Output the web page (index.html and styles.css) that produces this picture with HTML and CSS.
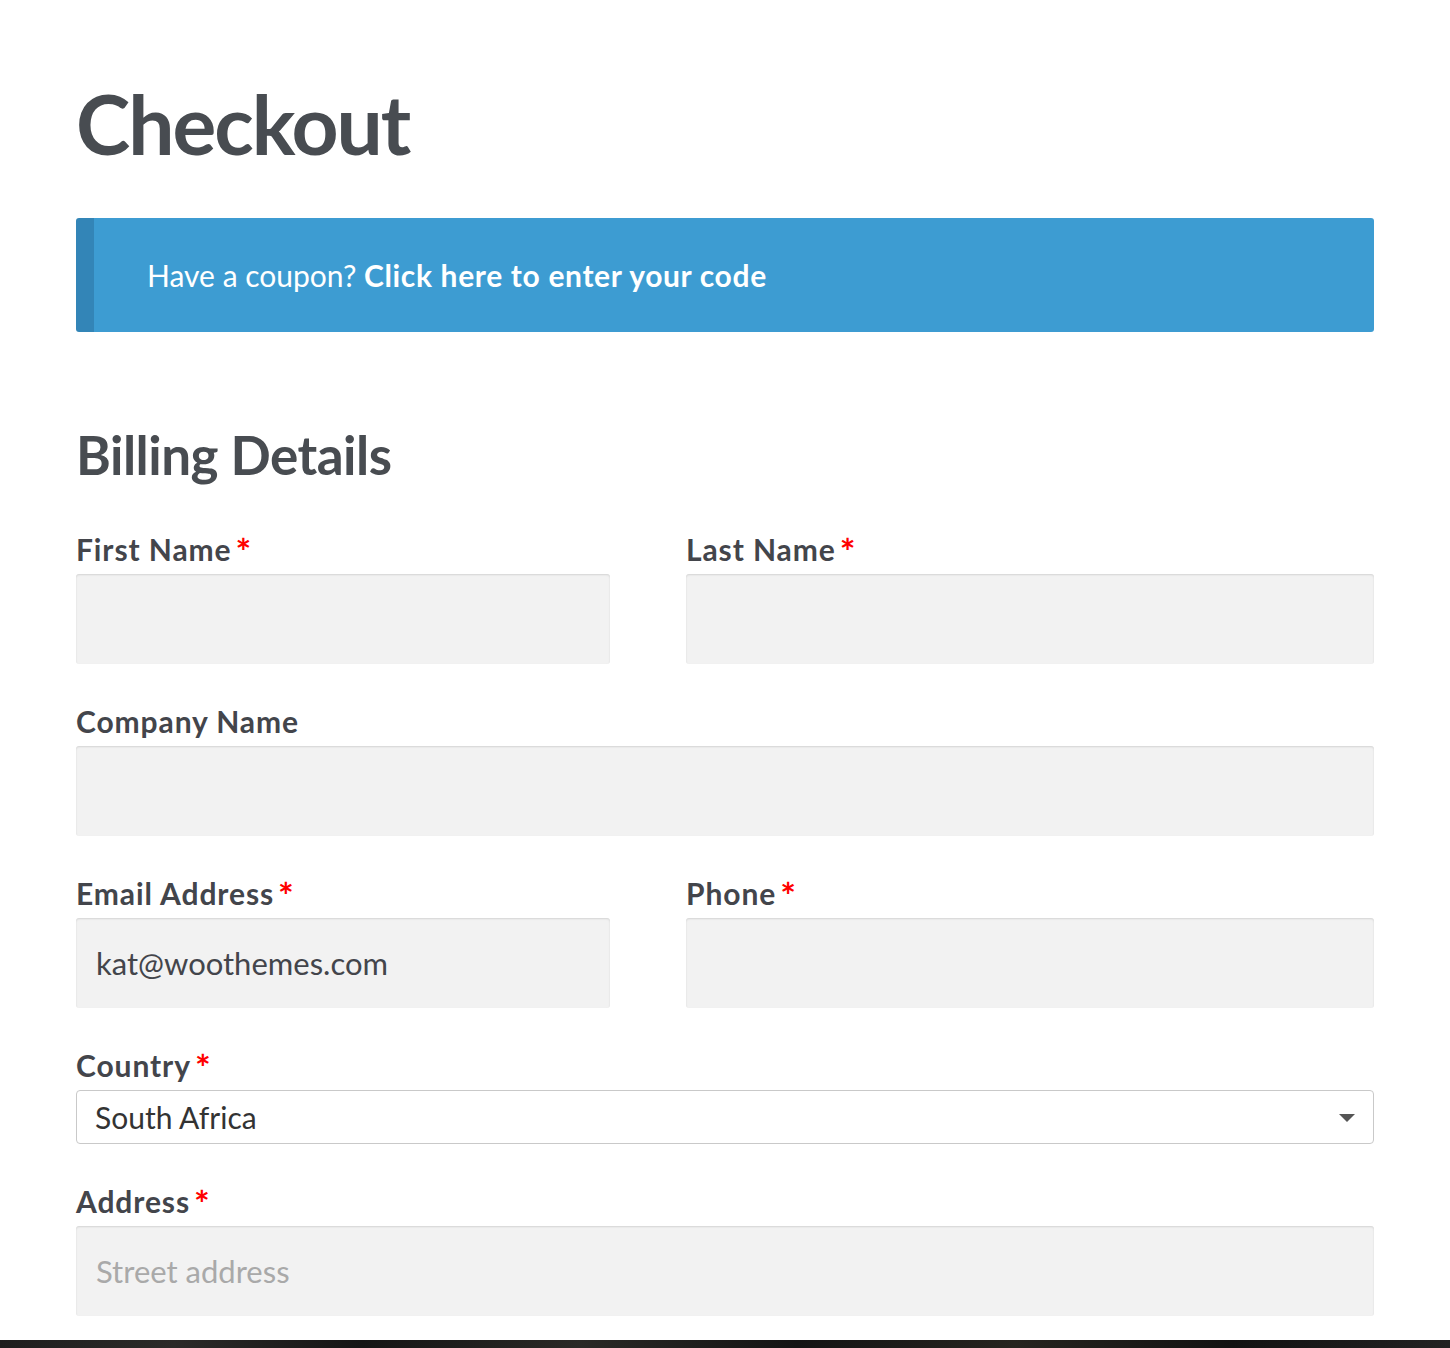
FILE: index.html
```html
<!DOCTYPE html>
<html lang="en">
<head>
<meta charset="utf-8">
<title>Checkout</title>
<link rel="stylesheet" href="styles.css">
</head>
<body>
<main class="page">
  <h1 class="title">Checkout</h1>
  <div class="notice">Have a coupon?&nbsp;<a class="notice-link" href="#">Click here to enter your code</a></div>
  <h2 class="section-title">Billing Details</h2>
  <form class="fields">
    <div class="field">
      <label class="label">First Name<span class="req">*</span></label>
      <input class="input" type="text">
    </div>
    <div class="field">
      <label class="label">Last Name<span class="req">*</span></label>
      <input class="input" type="text">
    </div>
    <div class="field wide">
      <label class="label">Company Name</label>
      <input class="input" type="text">
    </div>
    <div class="field">
      <label class="label">Email Address<span class="req">*</span></label>
      <input class="input" type="text" value="kat@woothemes.com">
    </div>
    <div class="field">
      <label class="label">Phone<span class="req">*</span></label>
      <input class="input" type="text">
    </div>
    <div class="field wide">
      <label class="label">Country<span class="req">*</span></label>
      <div class="select"><span class="select-text">South Africa</span><span class="arrow"></span></div>
    </div>
    <div class="field wide">
      <label class="label">Address<span class="req">*</span></label>
      <input class="input" type="text" placeholder="Street address">
    </div>
  </form>
</main>
<div class="footer-strip"></div>
</body>
</html>
```
FILE: styles.css
```css
html, body {
  margin: 0;
  padding: 0;
  background: #ffffff;
}
body {
  font-family: Lato, "Open Sans", sans-serif;
  color: #43454b;
  overflow: hidden;
}
.page {
  padding: 82px 76px 24px 76px;
}
.title {
  margin: 0;
  font-size: 82px;
  line-height: 82px;
  font-weight: 700;
  color: #484c51;
  letter-spacing: -2px;
}
.notice {
  margin-top: 54px;
  height: 114px;
  box-sizing: border-box;
  background: #3d9cd2;
  border-left: 18px solid #3385b7;
  border-radius: 3px;
  display: flex;
  align-items: center;
  padding-left: 53px;
  color: #ffffff;
  font-size: 30px;
  font-weight: 400;
}
.notice-link {
  color: #ffffff;
  font-weight: 700;
  text-decoration: none;
  letter-spacing: 0.65px;
}
.section-title {
  margin: 96px 0 0 0;
  font-size: 53px;
  line-height: 53px;
  font-weight: 700;
  color: #484c51;
  letter-spacing: -0.5px;
}
.fields {
  margin-top: 50px;
  display: grid;
  grid-template-columns: 534fr 688fr;
  column-gap: 76px;
  row-gap: 39px;
}
.field {
  display: flex;
  flex-direction: column;
}
.wide {
  grid-column: 1 / -1;
}
.label {
  display: block;
  font-size: 30px;
  line-height: 36px;
  height: 36px;
  font-weight: 700;
  color: #43454b;
  letter-spacing: 0.9px;
  margin-bottom: 7px;
}
.req {
  color: #ff0000;
  font-weight: 700;
  font-size: 37px;
  line-height: 0;
  letter-spacing: 0;
  margin-left: 4px;
  vertical-align: -4px;
}
.input {
  display: block;
  width: 100%;
  box-sizing: border-box;
  height: 90px;
  border: 0;
  border-radius: 3px;
  background: #f2f2f2;
  box-shadow: inset 0 1px 2px rgba(0, 0, 0, 0.13);
  padding: 0 20px;
  margin: 0;
  font-family: Lato, "Open Sans", sans-serif;
  font-size: 31px;
  color: #43454b;
  outline: none;
}
.input::placeholder {
  color: #a9a9a9;
}
.select {
  height: 54px;
  box-sizing: border-box;
  border: 1px solid #c9c9c9;
  border-radius: 4px;
  background: #ffffff;
  display: flex;
  align-items: center;
  justify-content: space-between;
  padding: 0 18px 0 18px;
  font-size: 30px;
  color: #333333;
}
.arrow {
  width: 0;
  height: 0;
  border-left: 8px solid transparent;
  border-right: 8px solid transparent;
  border-top: 8px solid #555555;
  margin-top: 2px;
}
.footer-strip {
  height: 8px;
  background: linear-gradient(90deg, #1e1e1e 0%, #2b2a28 12%, #151515 25%, #2a2926 40%, #141414 55%, #26241f 70%, #121212 85%, #222 100%);
}
```
